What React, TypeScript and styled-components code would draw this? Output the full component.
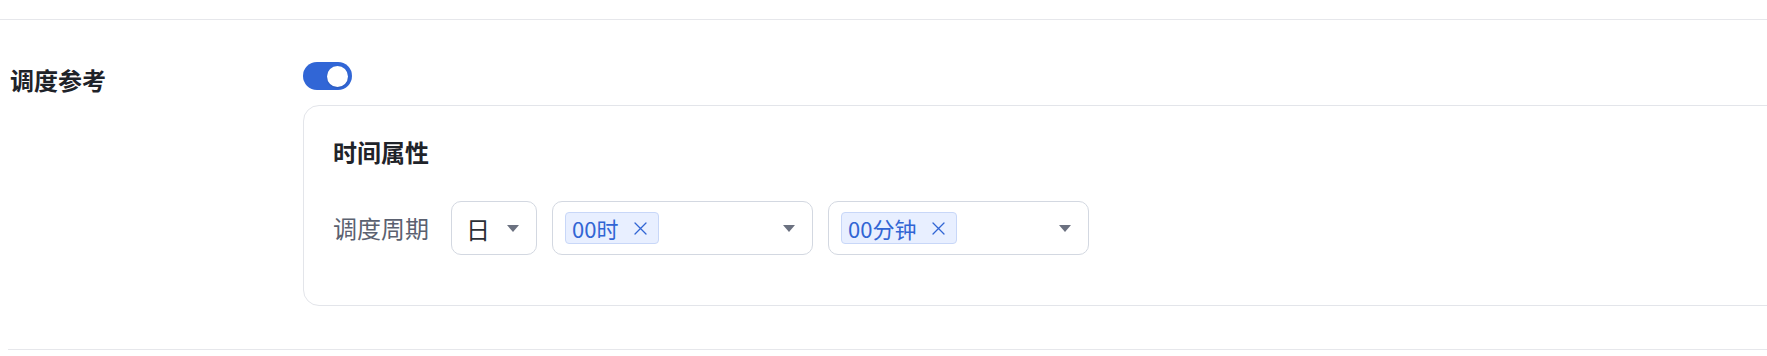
import React from "react";
import styled, { createGlobalStyle } from "styled-components";

const GlobalStyle = createGlobalStyle`
  html, body {
    margin: 0;
    padding: 0;
    background: #ffffff;
    overflow: hidden;
  }
  body {
    font-family: "Noto Sans CJK SC", "Noto Sans", sans-serif;
    color: #1f2329;
  }
`;

const Page = styled.div`
  width: 1767px;
  height: 356px;
  padding-top: 19px;
  box-sizing: border-box;
`;

const Divider = styled.div<{ $inset?: number }>`
  height: 1px;
  background: #e6e7eb;
  margin-left: ${(p) => p.$inset ?? 0}px;
`;

const FormRow = styled.div`
  display: grid;
  grid-template-columns: 293px 1fr;
  padding: 42px 0 43px 10px;
`;

const FieldLabel = styled.div`
  font-size: 24px;
  font-weight: 700;
  line-height: 28px;
  padding-top: 4px;
  color: #1f2329;
`;

const FieldBody = styled.div`
  display: flex;
  flex-direction: column;
  align-items: flex-start;
  gap: 15px;
`;

const Switch = styled.div<{ $on: boolean }>`
  width: 49px;
  height: 28px;
  border-radius: 14px;
  background: ${(p) => (p.$on ? "#3166d6" : "#c9cdd4")};
  display: flex;
  align-items: center;
  justify-content: ${(p) => (p.$on ? "flex-end" : "flex-start")};
  padding: 0 4px;
  box-sizing: border-box;
`;

const Knob = styled.div`
  width: 21px;
  height: 21px;
  border-radius: 50%;
  background: #ffffff;
  box-shadow: 0 1px 2px rgba(0, 0, 0, 0.15);
`;

const Card = styled.div`
  width: 1500px;
  box-sizing: border-box;
  border: 1px solid #e3e5ea;
  border-radius: 16px;
  padding: 30px 29px 50px;
`;

const CardTitle = styled.div`
  font-size: 24px;
  font-weight: 700;
  line-height: 32px;
  color: #1f2329;
  margin-bottom: 33px;
`;

const PeriodRow = styled.div`
  display: flex;
  align-items: center;
`;

const PeriodLabel = styled.div`
  font-size: 24px;
  line-height: 32px;
  color: #5b6170;
  margin-right: 22px;
`;

const Selects = styled.div`
  display: flex;
  gap: 15px;
`;

const Select = styled.div<{ $width: number }>`
  width: ${(p) => p.$width}px;
  height: 54px;
  box-sizing: border-box;
  border: 1px solid #d3d8e1;
  border-radius: 10px;
  display: flex;
  align-items: center;
  padding: 0 17px 0 12px;
  background: #fff;
`;

const SelectValue = styled.span`
  font-size: 24px;
  color: #2b2f36;
  flex: 1;
  padding-left: 2px;
`;

const Tag = styled.span`
  display: inline-flex;
  align-items: center;
  height: 32px;
  box-sizing: border-box;
  padding: 0 11px 0 6px;
  background: #e8efff;
  border: 1px solid #c8d7f8;
  border-radius: 4px;
  color: #3165d4;
  font-size: 22px;
  gap: 16px;
`;

const TagText = styled.span`
  line-height: 30px;
`;

const Spacer = styled.div`
  flex: 1;
`;

const Caret = styled.span`
  width: 0;
  height: 0;
  border-left: 6px solid transparent;
  border-right: 6px solid transparent;
  border-top: 7px solid #6b7180;
`;

const CloseIcon = () => (
  <svg width="13" height="13" viewBox="0 0 13 13" fill="none">
    <path d="M1 1L12 12M12 1L1 12" stroke="#3165d4" strokeWidth="1.3" strokeLinecap="round" />
  </svg>
);

export default function App() {
  return (
    <>
      <GlobalStyle />
      <Page>
        <Divider />
        <FormRow>
          <FieldLabel>调度参考</FieldLabel>
          <FieldBody>
            <Switch $on>
              <Knob />
            </Switch>
            <Card>
              <CardTitle>时间属性</CardTitle>
              <PeriodRow>
                <PeriodLabel>调度周期</PeriodLabel>
                <Selects>
                  <Select $width={86}>
                    <SelectValue>日</SelectValue>
                    <Caret />
                  </Select>
                  <Select $width={261}>
                    <Tag>
                      <TagText>00时</TagText>
                      <CloseIcon />
                    </Tag>
                    <Spacer />
                    <Caret />
                  </Select>
                  <Select $width={261}>
                    <Tag>
                      <TagText>00分钟</TagText>
                      <CloseIcon />
                    </Tag>
                    <Spacer />
                    <Caret />
                  </Select>
                </Selects>
              </PeriodRow>
            </Card>
          </FieldBody>
        </FormRow>
        <Divider $inset={8} />
      </Page>
    </>
  );
}
